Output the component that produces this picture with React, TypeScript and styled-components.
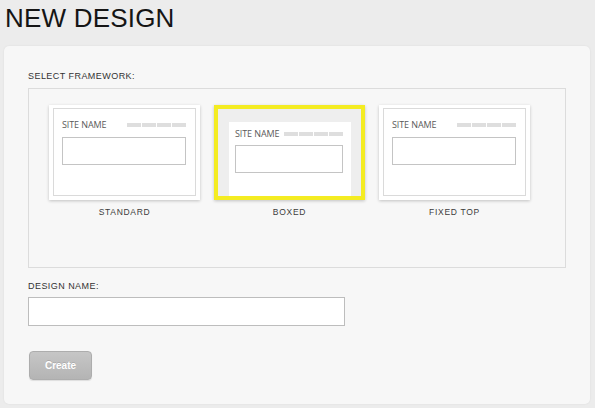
import React from 'react';
import styled, { createGlobalStyle } from 'styled-components';

const GlobalStyle = createGlobalStyle`
  body {
    margin: 0;
    background: #ececec;
    font-family: "Liberation Sans", Arial, sans-serif;
  }
`;

const Page = styled.div`
  width: 595px;
  height: 408px;
  overflow: hidden;
`;

const Title = styled.h1`
  margin: 0;
  padding: 3px 0 0 5px;
  font-size: 26px;
  line-height: 30px;
  font-weight: 400;
  letter-spacing: 0.2px;
  color: #151515;
`;

const Panel = styled.div`
  box-sizing: border-box;
  margin: 13px 0 0 4px;
  width: 586px;
  height: 358px;
  padding: 24px;
  background: #f7f7f7;
  border-radius: 5px;
  box-shadow: 0 0 2px rgba(0, 0, 0, 0.08);
  display: flex;
  flex-direction: column;
`;

const FieldLabel = styled.div<{ $top?: number }>`
  margin-top: ${(p) => p.$top ?? 0}px;
  font-size: 9px;
  line-height: 12px;
  letter-spacing: 0.45px;
  color: #333;
`;

const FrameworkBox = styled.div`
  box-sizing: border-box;
  margin-top: 6px;
  height: 181px;
  border: 1px solid #dcdcdc;
  padding: 16px 20px;
  display: flex;
  gap: 14px;
  align-items: flex-start;
`;

const Option = styled.div`
  width: 151px;
  display: flex;
  flex-direction: column;
`;

const Thumb = styled.div<{ $selected?: boolean }>`
  box-sizing: border-box;
  height: 95px;
  display: flex;
  background: ${(p) => (p.$selected ? '#eeeeee' : '#ffffff')};
  border: ${(p) => (p.$selected ? '4px solid #f4ec22' : 'none')};
  padding: ${(p) => (p.$selected ? '13px 10px 0 11px' : '3px 4px 4px 4px')};
  box-shadow: 0 1px 3px rgba(0, 0, 0, 0.22);
`;

const ThumbInner = styled.div<{ $boxed?: boolean }>`
  flex: 1;
  box-sizing: border-box;
  background: #fff;
  border: ${(p) => (p.$boxed ? 'none' : '1px solid #dadada')};
  padding: ${(p) => (p.$boxed ? '7px 8px 0 6px' : '11px 9px 0 8px')};
  display: flex;
  flex-direction: column;
`;

const SiteRow = styled.div`
  display: flex;
  align-items: center;
  justify-content: space-between;
`;

const SiteName = styled.span`
  font-family: "Open Sans", sans-serif;
  font-size: 9px;
  line-height: 10px;
  color: #5a5a5a;
  letter-spacing: -0.1px;
`;

const Nav = styled.div`
  display: flex;
  gap: 1px;
`;

const NavItem = styled.span`
  width: 14px;
  height: 4px;
  background: #dedede;
`;

const FakeInput = styled.div<{ $gap: number }>`
  margin-top: ${(p) => p.$gap}px;
  height: 28px;
  box-sizing: border-box;
  border: 1px solid #c4c4c4;
  background: #fff;
`;

const OptionLabel = styled.div`
  margin-top: 7px;
  text-align: center;
  font-size: 8.5px;
  line-height: 11px;
  letter-spacing: 0.7px;
  color: #3c3c3c;
`;

const NameInput = styled.input`
  box-sizing: border-box;
  margin-top: 5px;
  width: 317px;
  height: 29px;
  border: 1px solid #bdbdbd;
  background: #fff;
  outline: none;
  padding: 0 6px;
`;

const CreateButton = styled.button`
  margin: 25px 0 0 1px;
  width: 63px;
  height: 29px;
  border: 1px solid #adadad;
  border-radius: 4px;
  background: linear-gradient(#c6c6c6, #b4b4b4);
  color: #fff;
  font-family: "Liberation Sans", Arial, sans-serif;
  font-size: 10px;
  font-weight: 700;
  text-shadow: 0 -1px 0 rgba(0, 0, 0, 0.12);
  box-shadow: 0 1px 1px rgba(0, 0, 0, 0.1);
  cursor: pointer;
`;

const SiteHeader = () => (
  <SiteRow>
    <SiteName>SITE NAME</SiteName>
    <Nav>
      <NavItem />
      <NavItem />
      <NavItem />
      <NavItem />
    </Nav>
  </SiteRow>
);

const frameworks = [
  { id: 'standard', label: 'STANDARD', boxed: false },
  { id: 'boxed', label: 'BOXED', boxed: true },
  { id: 'fixed', label: 'FIXED TOP', boxed: false },
];

export default function App() {
  return (
    <Page>
      <GlobalStyle />
      <Title>NEW DESIGN</Title>
      <Panel>
        <FieldLabel>SELECT FRAMEWORK:</FieldLabel>
        <FrameworkBox>
          {frameworks.map((f) => (
            <Option key={f.id}>
              <Thumb $selected={f.boxed}>
                <ThumbInner $boxed={f.boxed}>
                  <SiteHeader />
                  <FakeInput $gap={f.boxed ? 6 : 7} />
                </ThumbInner>
              </Thumb>
              <OptionLabel>{f.label}</OptionLabel>
            </Option>
          ))}
        </FrameworkBox>
        <FieldLabel $top={12}>DESIGN NAME:</FieldLabel>
        <NameInput type="text" />
        <CreateButton type="button">Create</CreateButton>
      </Panel>
    </Page>
  );
}
